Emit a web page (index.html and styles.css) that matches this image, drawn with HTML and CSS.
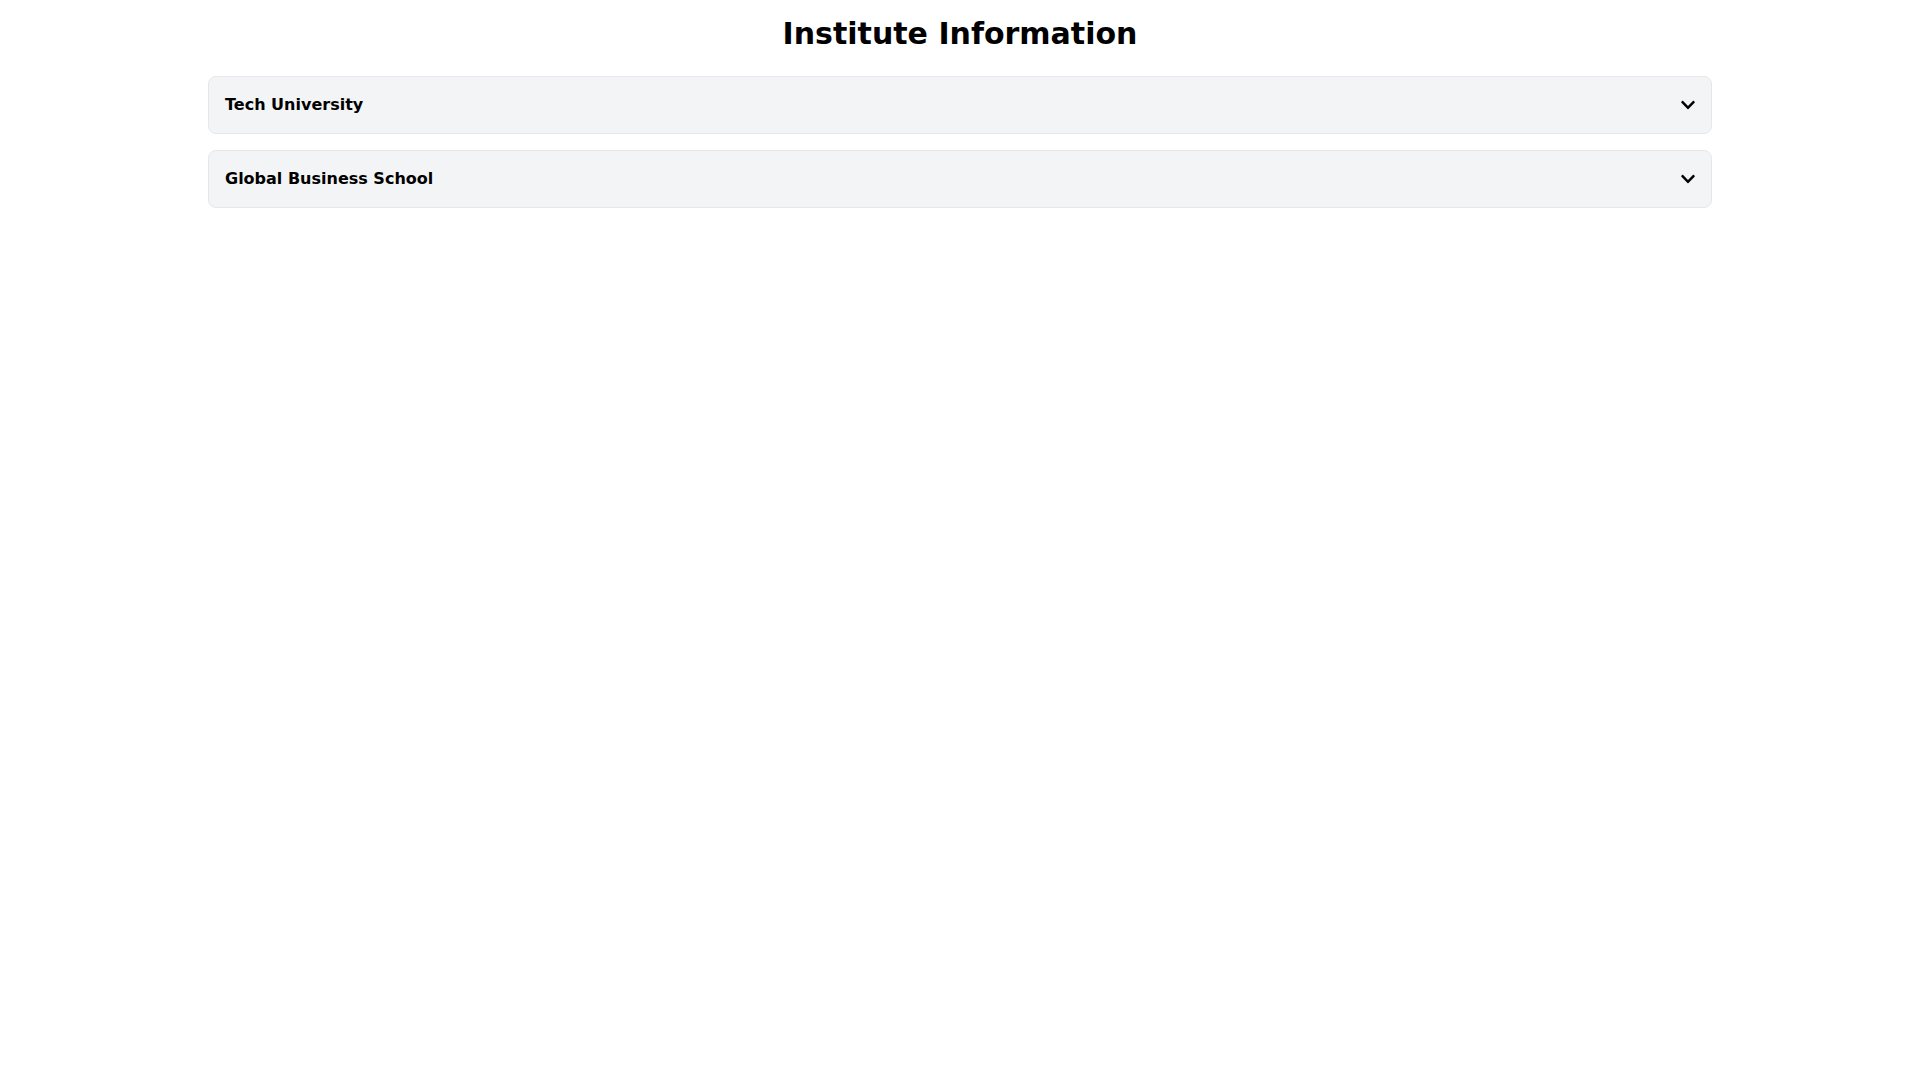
FILE: index.html
```html
<!DOCTYPE html>
<html lang="en">
<head>
<meta charset="utf-8">
<title>Institute Information</title>
<link rel="stylesheet" href="styles.css">
</head>
<body>
<div class="container">
  <h1 class="title">Institute Information</h1>
  <div class="list">
    <div class="item">
      <span class="name">Tech University</span>
      <svg class="chev" viewBox="0 0 448 512" width="14" height="16" fill="currentColor"><path d="M207.029 381.476L12.686 187.132c-9.373-9.373-9.373-24.569 0-33.941l22.667-22.667c9.357-9.357 24.522-9.375 33.901-.04L224 284.505l154.745-154.021c9.379-9.335 24.544-9.317 33.901.04l22.667 22.667c9.373 9.373 9.373 24.569 0 33.941L240.971 381.476c-9.373 9.372-24.569 9.372-33.942 0z"/></svg>
    </div>
    <div class="item">
      <span class="name">Global Business School</span>
      <svg class="chev" viewBox="0 0 448 512" width="14" height="16" fill="currentColor"><path d="M207.029 381.476L12.686 187.132c-9.373-9.373-9.373-24.569 0-33.941l22.667-22.667c9.357-9.357 24.522-9.375 33.901-.04L224 284.505l154.745-154.021c9.379-9.335 24.544-9.317 33.901.04l22.667 22.667c9.373 9.373 9.373 24.569 0 33.941L240.971 381.476c-9.373 9.372-24.569 9.372-33.942 0z"/></svg>
    </div>
  </div>
</div>
</body>
</html>
```
FILE: styles.css
```css
* { box-sizing: border-box; }
body {
  margin: 0;
  font-family: "DejaVu Sans", sans-serif;
  color: #000;
  background: #fff;
}
.container {
  max-width: 1536px;
  margin: 0 auto;
  padding: 16px;
}
.title {
  margin: 0 0 24px;
  font-size: 30px;
  line-height: 36px;
  font-weight: 700;
  text-align: center;
}
.list {
  display: flex;
  flex-direction: column;
  gap: 16px;
}
.item {
  display: flex;
  align-items: center;
  justify-content: space-between;
  padding: 16px;
  background: #f3f4f6;
  border: 1px solid #e5e7eb;
  border-radius: 8px;
}
.name {
  font-size: 16px;
  line-height: 24px;
  font-weight: 700;
}
.chev { display: block; }
```
